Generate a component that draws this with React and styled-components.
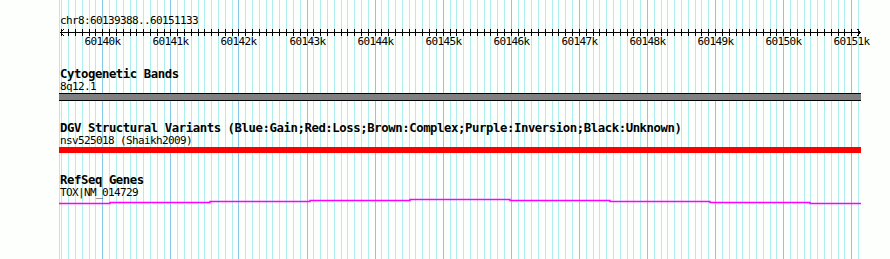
import React from "react";
import styled, { createGlobalStyle } from "styled-components";

const START = 60139388;
const END = 60151133;
const ORIGIN = 59;
const WIDTH = 802;
const SCALE = 0.06809;

// page x of a base position
const px = (bp) => 60.6 + (bp - START) * SCALE;
const col = (bp) => px(bp) - ORIGIN;

const minorTicks = [];
for (let bp = 60139400; bp <= END; bp += 100) minorTicks.push(bp);
const majorTicks = minorTicks.filter((bp) => bp % 1000 === 0);

const geneSteps = [
  [59, 110, 203],
  [110, 210, 202],
  [210, 310, 201],
  [310, 410, 200],
  [410, 510, 199],
  [510, 610, 200],
  [610, 710, 201],
  [710, 810, 202],
  [810, 861, 203],
];

const GlobalStyle = createGlobalStyle`
  html, body {
    margin: 0;
    padding: 0;
    background: #ffffff;
  }
  body {
    font-family: "DejaVu Sans Mono", "Liberation Mono", monospace;
    color: #000;
  }
`;

function GridLines() {
  return (
    <GridLayer width="890" height="259">
      <line x1={ORIGIN + 0.5} x2={ORIGIN + 0.5} y1="0" y2="259" stroke="#afeeee" />
      {minorTicks.map((bp) => {
        const x = Math.round(px(bp)) + 0.5;
        return (
          <line
            key={bp}
            x1={x}
            x2={x}
            y1="0"
            y2="259"
            stroke={bp % 1000 === 0 ? "#86c8ea" : "#afeeee"}
          />
        );
      })}
    </GridLayer>
  );
}

function Ruler() {
  return (
    <RulerBlock>
      <RulerLabel>
        chr8:{START}..{END}
      </RulerLabel>
      <AxisSvg width={WIDTH + 2} height="20">
        <g stroke="#000" fill="none" shapeRendering="crispEdges">
          <line x1="1" x2={WIDTH} y1="5.5" y2="5.5" />
          {minorTicks.map((bp) => {
            const x = Math.round(col(bp)) + 0.5;
            return <line key={bp} x1={x} x2={x} y1="2" y2="9" />;
          })}
        </g>
        <g stroke="#000" fill="none">
          <polyline points="5,2 1.5,5.5 5,9" />
          <polyline points={`${WIDTH - 4},2 ${WIDTH - 0.5},5.5 ${WIDTH - 4},9`} />
        </g>
        {majorTicks.map((bp) => (
          <TickText key={bp} x={Math.round(col(bp)) + 0.5} y="17.5" textAnchor="middle">
            {bp / 1000}k
          </TickText>
        ))}
      </AxisSvg>
    </RulerBlock>
  );
}

function Track({ title, label, children }) {
  return (
    <TrackBlock>
      <TrackTitle>{title}</TrackTitle>
      <FeatureLabel>{label}</FeatureLabel>
      {children}
    </TrackBlock>
  );
}

function GeneLine() {
  const points = geneSteps
    .map(([a, b, y]) => `${a - ORIGIN},${y - 198 + 0.5} ${b - ORIGIN},${y - 198 + 0.5}`)
    .join(" ");
  return (
    <GeneSvg width={WIDTH + 2} height="8">
      <polyline points={points} fill="none" stroke="#ff00ff" strokeWidth="1.4" />
    </GeneSvg>
  );
}

export default function App() {
  return (
    <>
      <GlobalStyle />
      <Browser>
        <GridLines />
        <Column>
          <Ruler />
          <Track title="Cytogenetic Bands" label="8q12.1">
            <Band />
          </Track>
          <Track
            title="DGV Structural Variants (Blue:Gain;Red:Loss;Brown:Complex;Purple:Inversion;Black:Unknown)"
            label="nsv525018 (Shaikh2009)"
          >
            <VariantBar />
          </Track>
          <Track title="RefSeq Genes" label="TOX|NM_014729">
            <GeneLine />
          </Track>
        </Column>
      </Browser>
    </>
  );
}

const Browser = styled.div`
  position: relative;
  width: 890px;
  height: 259px;
  overflow: hidden;
  background: #fdfffd;
`;

const GridLayer = styled.svg`
  position: absolute;
  left: 0;
  top: 0;
  shape-rendering: crispEdges;
`;

const Column = styled.div`
  position: relative;
  margin-left: ${ORIGIN}px;
  width: ${WIDTH + 2}px;
  display: flex;
  flex-direction: column;
`;

const RulerBlock = styled.div`
  padding-top: 15px;
  display: flex;
  flex-direction: column;
`;

const SmallText = styled.div`
  font-size: 11px;
  letter-spacing: -0.62px;
  padding-left: 1px;
  white-space: nowrap;
`;

const RulerLabel = styled(SmallText)`
  line-height: 12px;
`;

const AxisSvg = styled.svg`
  display: block;
  overflow: visible;
`;

const TickText = styled.text`
  font-family: "DejaVu Sans Mono", "Liberation Mono", monospace;
  font-size: 11px;
  letter-spacing: -0.62px;
  fill: #000;
`;

const TrackBlock = styled.div`
  display: flex;
  flex-direction: column;
  margin-top: 21px;
`;

const TrackTitle = styled.div`
  font-weight: bold;
  font-size: 12.3px;
  letter-spacing: -0.42px;
  line-height: 13px;
  padding-left: 1px;
  white-space: nowrap;
`;

const FeatureLabel = styled(SmallText)`
  line-height: 11px;
`;

const Band = styled.div`
  margin-top: 1px;
  height: 6px;
  width: ${WIDTH}px;
  background: #808080;
  border-top: 1px solid #000;
  border-bottom: 1px solid #000;
`;

const VariantBar = styled.div`
  margin-top: 1px;
  height: 6px;
  width: ${WIDTH}px;
  background: #ff0000;
`;

const GeneSvg = styled.svg`
  display: block;
`;
